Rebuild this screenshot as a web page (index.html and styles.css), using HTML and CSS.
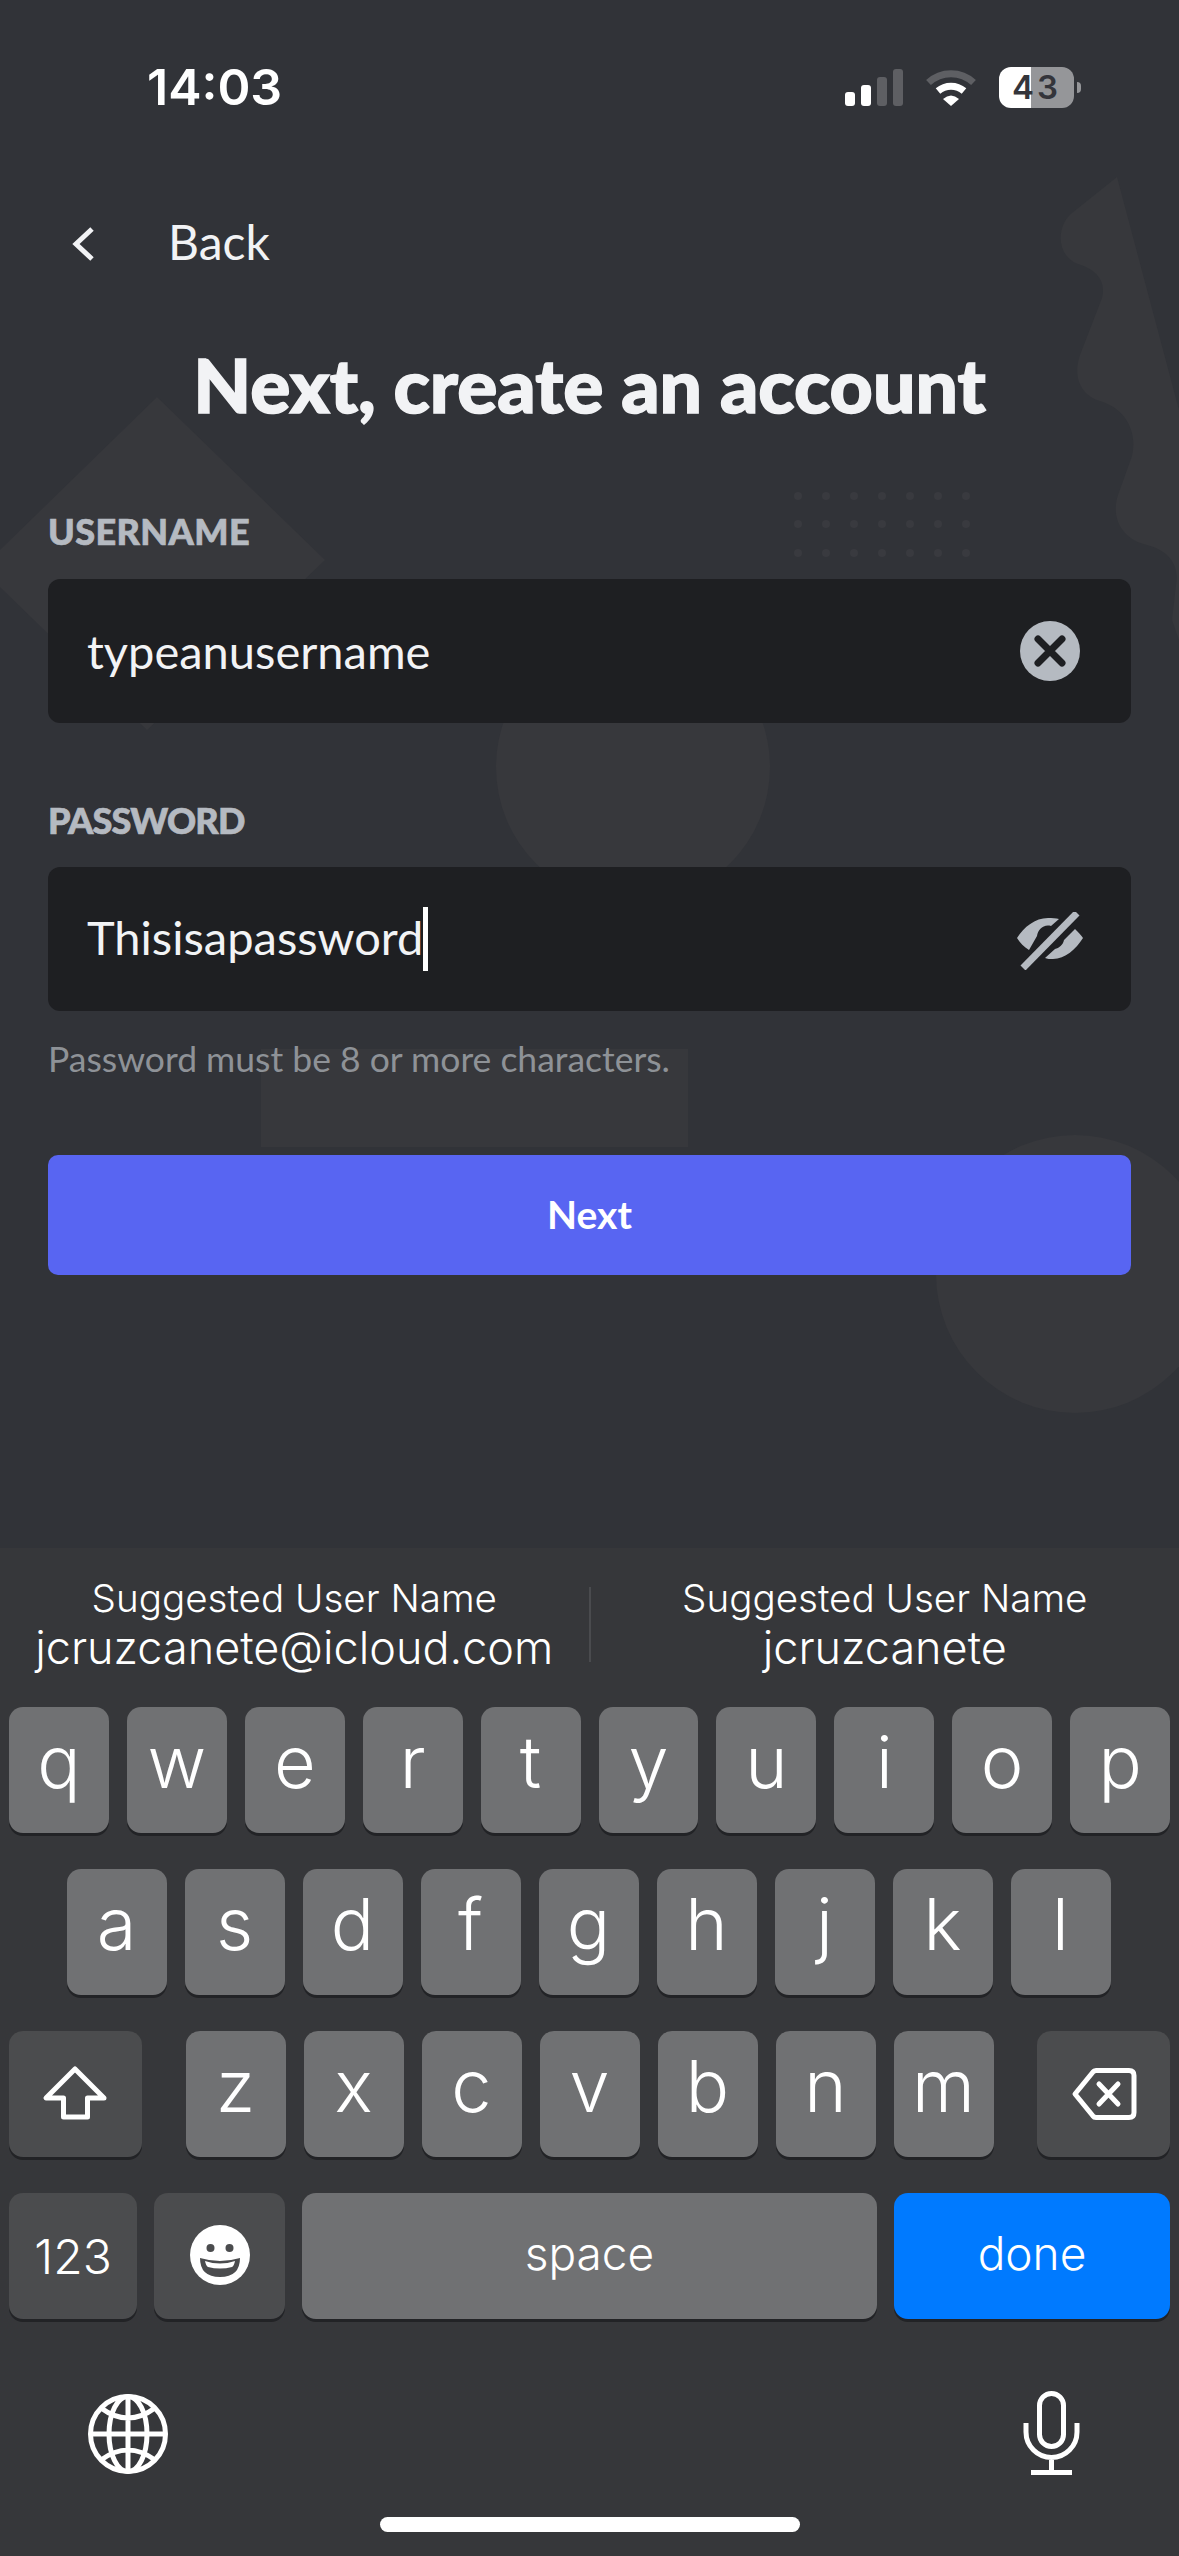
FILE: index.html
```html
<!DOCTYPE html>
<html lang="en">
<head>
    <meta charset="UTF-8">
    <meta name="viewport" content="width=device-width, initial-scale=1.0">
    <title>Next, create an account</title>
    <link rel="stylesheet" href="styles.css">
</head>
<body>
    <main class="screen">
        <svg class="bg-art" width="1179" height="1548" viewBox="0 0 1179 1548">
            <path d="M1117 177 L1072 213 C1056 226 1056 256 1078 264 C1098 270 1106 282 1102 298 L1080 355 C1072 378 1082 396 1100 401 C1124 408 1138 430 1132 456 L1118 495 C1110 520 1124 540 1147 545 C1168 550 1180 565 1176 585 L1172 620 L1179 640 V410 Z"/>
            <path d="M157 397 L325 560 L147 730 L0 587 V550 Z"/>
            <circle cx="633" cy="767" r="137"/>
            <rect x="261" y="1049" width="427" height="98"/>
            <circle cx="1075" cy="1274" r="139"/>
            <g class="bg-dots">
                <circle cx="798" cy="496" r="4"/><circle cx="826" cy="496" r="4"/><circle cx="854" cy="496" r="4"/><circle cx="882" cy="496" r="4"/><circle cx="910" cy="496" r="4"/><circle cx="938" cy="496" r="4"/><circle cx="966" cy="496" r="4"/>
                <circle cx="798" cy="524" r="4"/><circle cx="826" cy="524" r="4"/><circle cx="854" cy="524" r="4"/><circle cx="882" cy="524" r="4"/><circle cx="910" cy="524" r="4"/><circle cx="938" cy="524" r="4"/><circle cx="966" cy="524" r="4"/>
                <circle cx="798" cy="553" r="4"/><circle cx="826" cy="553" r="4"/><circle cx="854" cy="553" r="4"/><circle cx="882" cy="553" r="4"/><circle cx="910" cy="553" r="4"/><circle cx="938" cy="553" r="4"/><circle cx="966" cy="553" r="4"/>
            </g>
        </svg>

        <header class="status-bar">
            <span class="status-time">14:03</span>
            <div class="status-icons">
                <div class="signal">
                    <span class="bar bar-1"></span>
                    <span class="bar bar-2"></span>
                    <span class="bar bar-3"></span>
                    <span class="bar bar-4"></span>
                </div>
                <svg class="wifi" width="52" height="37" viewBox="0 0 52 37">
                    <path d="M3.5 13.5 A33 33 0 0 1 48.5 13.5" fill="none" stroke="#5e5f63" stroke-width="7"/>
                    <path d="M13 22 A20 20 0 0 1 39 22" fill="none" stroke="#fff" stroke-width="7"/>
                    <path d="M18 30 Q26 23 34 30 L26 37 Z" fill="#fff"/>
                </svg>
                <div class="battery">
                    <span class="battery-level">43</span>
                    <span class="battery-tip"></span>
                </div>
            </div>
        </header>

        <nav class="nav-row">
            <svg width="24" height="36" viewBox="0 0 24 36">
                <path d="M21 3 L5 18 L21 33" fill="none" stroke="#f2f3f5" stroke-width="5"/>
            </svg>
            <span class="nav-back">Back</span>
        </nav>

        <h1 class="page-title">Next, create an account</h1>

        <form class="signup-form">
            <label class="field-label label-username">USERNAME</label>
            <div class="field">
                <span>typeanusername</span>
                <svg class="field-clear" width="60" height="60" viewBox="0 0 60 60">
                    <circle cx="30" cy="30" r="30" fill="#b5bac1"/>
                    <path d="M18 18 L42 42 M42 18 L18 42" stroke="#1e1f22" stroke-width="7" stroke-linecap="round"/>
                </svg>
            </div>

            <label class="field-label label-password">PASSWORD</label>
            <div class="field">
                <span class="field-value">Thisisapassword<i class="caret"></i></span>
                <svg class="field-eye" width="66" height="58" viewBox="0 0 66 58">
                    <path d="M0 26 C7 15 18 6 31 6 C35 6 39 6 42 7 L34 14 C26 12 21 18 20 24 L12 38 C7 35 3 31 0 26Z" fill="#b5bac1"/>
                    <path d="M58 17 C61 20 64 23 66 26 C59 37 48 47 36 47 C33 47 30 47 28 46 L38 37 C42 36 46 33 47 28 Z" fill="#b5bac1"/>
                    <path d="M60 1 L6 56" stroke="#1e1f22" stroke-width="13"/>
                    <path d="M60 1 L6 56" stroke="#b5bac1" stroke-width="7"/>
                </svg>
            </div>
            <p class="field-hint">Password must be 8 or more characters.</p>

            <button class="next-btn" type="button">Next</button>
        </form>

        <section class="keyboard">
            <div class="suggestions">
                <div class="suggestion">
                    <span class="suggestion-title">Suggested User Name</span>
                    <span class="suggestion-value">jcruzcanete@icloud.com</span>
                </div>
                <span class="suggestion-divider"></span>
                <div class="suggestion">
                    <span class="suggestion-title">Suggested User Name</span>
                    <span class="suggestion-value">jcruzcanete</span>
                </div>
            </div>

            <div class="key-rows">
                <div class="key-row row-top">
                    <span class="key">q</span><span class="key">w</span><span class="key">e</span><span class="key">r</span><span class="key">t</span><span class="key">y</span><span class="key">u</span><span class="key">i</span><span class="key">o</span><span class="key">p</span>
                </div>
                <div class="key-row row-home">
                    <span class="key">a</span><span class="key">s</span><span class="key">d</span><span class="key">f</span><span class="key">g</span><span class="key">h</span><span class="key">j</span><span class="key">k</span><span class="key">l</span>
                </div>
                <div class="key-row row-bottom">
                    <span class="key key-dark key-side">
                        <svg width="70" height="60" viewBox="0 0 70 60">
                            <path d="M34 5 L5 34 H22.5 V53 H46.5 V34 H63 Z" fill="none" stroke="#fff" stroke-width="5" stroke-linejoin="round"/>
                        </svg>
                    </span>
                    <div class="letter-group">
                        <span class="key">z</span><span class="key">x</span><span class="key">c</span><span class="key">v</span><span class="key">b</span><span class="key">n</span><span class="key">m</span>
                    </div>
                    <span class="key key-dark key-side">
                        <svg width="72" height="60" viewBox="0 0 72 60">
                            <path d="M7 30 L25 8 Q26 6.5 28 6.5 H61 Q66 6.5 66 11.5 V48.5 Q66 53.5 61 53.5 H28 Q26 53.5 25 52 Z" fill="none" stroke="#fff" stroke-width="5" stroke-linejoin="round"/>
                            <path d="M31 20 L50 40 M50 20 L31 40" stroke="#fff" stroke-width="5" stroke-linecap="round"/>
                        </svg>
                    </span>
                </div>
                <div class="key-row row-space">
                    <span class="key key-dark key-num">123</span>
                    <span class="key key-dark key-emoji">
                        <svg width="60" height="60" viewBox="0 0 60 60">
                            <circle cx="30" cy="30" r="30" fill="#fff"/>
                            <circle cx="20.5" cy="23" r="4" fill="#4b4c4e"/>
                            <circle cx="39.5" cy="23" r="4" fill="#4b4c4e"/>
                            <path d="M10 33 Q30 39 50 33 Q50 52 30 52 Q10 52 10 33Z" fill="#4b4c4e"/>
                            <path d="M15 36 Q30 41 45 36 Q44 41 42 42 Q30 45 18 42 Q16 41 15 36Z" fill="#fff"/>
                        </svg>
                    </span>
                    <span class="key key-space">space</span>
                    <span class="key key-done">done</span>
                </div>
            </div>

            <div class="kb-tools">
                <svg class="globe" width="80" height="80" viewBox="0 0 80 80" fill="none" stroke="#fff" stroke-width="5">
                    <circle cx="40" cy="40" r="37.5"/>
                    <ellipse cx="40" cy="40" rx="19" ry="37.5"/>
                    <path d="M40 2.5 V77.5 M2.5 40 H77.5 M13 14 Q40 34 67 14 M13 66 Q40 46 67 66"/>
                </svg>
                <svg width="62" height="84" viewBox="0 0 62 84" fill="none" stroke="#fff" stroke-width="5">
                    <rect x="19.5" y="2.5" width="24" height="53" rx="12"/>
                    <path d="M6 32 V41 A25.5 25.5 0 0 0 57 41 V32 M31.5 67 V81 M11 81.5 H52"/>
                </svg>
            </div>
            <div class="home-bar"></div>
        </section>
    </main>
</body>
</html>
```

FILE: styles.css
```css
* {
    box-sizing: border-box;
}

body {
    margin: 0;
    background-color: #313338;
    font-family: Lato, "Open Sans", sans-serif;
    color: #f2f3f5;
}

.screen {
    position: relative;
    display: flex;
    flex-direction: column;
    width: 1179px;
    height: 2556px;
    overflow: hidden;
    background-color: #313338;
}

.bg-art {
    position: absolute;
    top: 0;
    left: 0;
    fill: #37383c;
}

.bg-dots {
    fill: #393a3f;
}

/* status bar */
.status-bar {
    position: relative;
    display: flex;
    justify-content: space-between;
    align-items: center;
    height: 108px;
    padding: 67px 105px 0 147px;
}

.status-time {
    font-family: Inter, sans-serif;
    font-size: 50px;
    font-weight: 600;
    line-height: 41px;
    color: #fff;
}

.status-icons {
    display: flex;
    align-items: center;
    gap: 22px;
}

.signal {
    display: flex;
    align-items: flex-end;
    gap: 6px;
    height: 37px;
}

.bar {
    width: 10px;
    border-radius: 3px;
    background-color: #5e5f63;
}

.bar-1 {
    height: 14px;
    background-color: #fff;
}

.bar-2 {
    height: 21px;
    background-color: #fff;
}

.bar-3 {
    height: 29px;
}

.bar-4 {
    height: 37px;
}

.battery {
    position: relative;
    width: 75px;
    height: 41px;
    border-radius: 12px;
    background: linear-gradient(90deg, #fff 0, #fff 32px, #959699 32px);
    text-align: center;
}

.battery-level {
    font-family: Inter, sans-serif;
    font-size: 33px;
    font-weight: 600;
    line-height: 41px;
    letter-spacing: 3px;
    color: #34353b;
}

.battery-tip {
    position: absolute;
    top: 15px;
    right: -7px;
    width: 4px;
    height: 11px;
    border-radius: 0 4px 4px 0;
    background-color: #959699;
}

/* nav + title */
.nav-row {
    position: relative;
    display: flex;
    align-items: center;
    gap: 73px;
    height: 80px;
    margin-top: 96px;
    padding-left: 71px;
}

.nav-back {
    padding-bottom: 6px;
    font-size: 48px;
}

.page-title {
    position: relative;
    margin: 60px 0 2px;
    font-size: 75px;
    font-weight: 900;
    line-height: 80px;
    text-align: center;
    -webkit-text-stroke: 1.5px #f2f3f5;
}

/* form */
.signup-form {
    position: relative;
    display: flex;
    flex-direction: column;
    margin-top: 85px;
    padding: 0 48px;
}

.field-label {
    height: 40px;
    margin-bottom: 28px;
    font-size: 36px;
    font-weight: 900;
    line-height: 40px;
    color: #b5bac1;
    -webkit-text-stroke: 0.7px #b5bac1;
}

.label-username {
    letter-spacing: 0.4px;
}

.label-password {
    margin-top: 77px;
    margin-bottom: 27px;
    letter-spacing: -0.8px;
}

.field {
    display: flex;
    justify-content: space-between;
    align-items: center;
    height: 144px;
    padding: 0 48px 0 39px;
    border-radius: 12px;
    background-color: #1e1f22;
    font-size: 47px;
}

.field-clear {
    margin-right: 3px;
}

.field-eye {
    margin-top: 4px;
}

.field-value {
    padding-bottom: 2px;
    line-height: 64px;
}

.caret {
    display: inline-block;
    width: 5px;
    height: 64px;
    vertical-align: -16px;
    background-color: #fff;
}

.field-hint {
    height: 40px;
    margin: 28px 0 0;
    font-size: 35.5px;
    line-height: 40px;
    color: #8e9297;
}

.next-btn {
    height: 120px;
    margin-top: 76px;
    padding-bottom: 3px;
    border: none;
    border-radius: 10px;
    background-color: #5865f2;
    font-family: inherit;
    font-size: 39px;
    font-weight: 700;
    color: #fff;
}

/* keyboard */
.keyboard {
    position: relative;
    display: flex;
    flex-direction: column;
    margin-top: auto;
    height: 1008px;
    background-color: #36373a;
    font-family: Inter, sans-serif;
    color: #fff;
}

.suggestions {
    display: flex;
    align-items: center;
    height: 159px;
    padding-bottom: 6px;
}

.suggestion {
    display: flex;
    flex: 1;
    flex-direction: column;
    align-items: center;
    font-weight: 300;
}

.suggestion-title {
    font-size: 38.6px;
    line-height: 49px;
}

.suggestion-value {
    margin-top: -2px;
    font-size: 45px;
    line-height: 54px;
}

.suggestion-divider {
    width: 2px;
    height: 75px;
    background-color: #4a4b4e;
}

.key-rows {
    display: flex;
    flex-direction: column;
    gap: 36px;
    padding: 0 9px;
}

.key-row {
    display: flex;
    gap: 18px;
    height: 126px;
}

.row-home {
    justify-content: center;
    padding-right: 2px;
}

.row-bottom {
    justify-content: space-between;
}

.row-space {
    gap: 17px;
}

.letter-group {
    display: flex;
    gap: 18px;
}

.key {
    display: flex;
    justify-content: center;
    align-items: center;
    width: 100px;
    padding-bottom: 18px;
    border-radius: 14px;
    background-color: #707173;
    box-shadow: 0 3px 0 #222326;
    font-size: 72px;
    font-weight: 300;
}

.row-top .key {
    flex: 1;
    width: auto;
}

.key-dark {
    padding-bottom: 0;
    background-color: #4b4c4e;
}

.key-side {
    width: 133px;
}

.key-num {
    width: 128px;
    font-size: 48px;
}

.key-emoji {
    width: 131px;
    padding-bottom: 2px;
}

.key-space {
    flex: 1;
    padding-bottom: 6px;
    font-size: 46px;
}

.key-done {
    width: 276px;
    padding-bottom: 6px;
    background-color: #007aff;
    font-size: 46px;
}

.kb-tools {
    display: flex;
    justify-content: space-between;
    align-items: center;
    height: 84px;
    margin-top: 72px;
    padding: 0 97px 0 88px;
}

.globe {
    margin-top: 2px;
}

.home-bar {
    align-self: center;
    width: 420px;
    height: 15px;
    margin-top: 42px;
    border-radius: 8px;
    background-color: #fff;
}
```
